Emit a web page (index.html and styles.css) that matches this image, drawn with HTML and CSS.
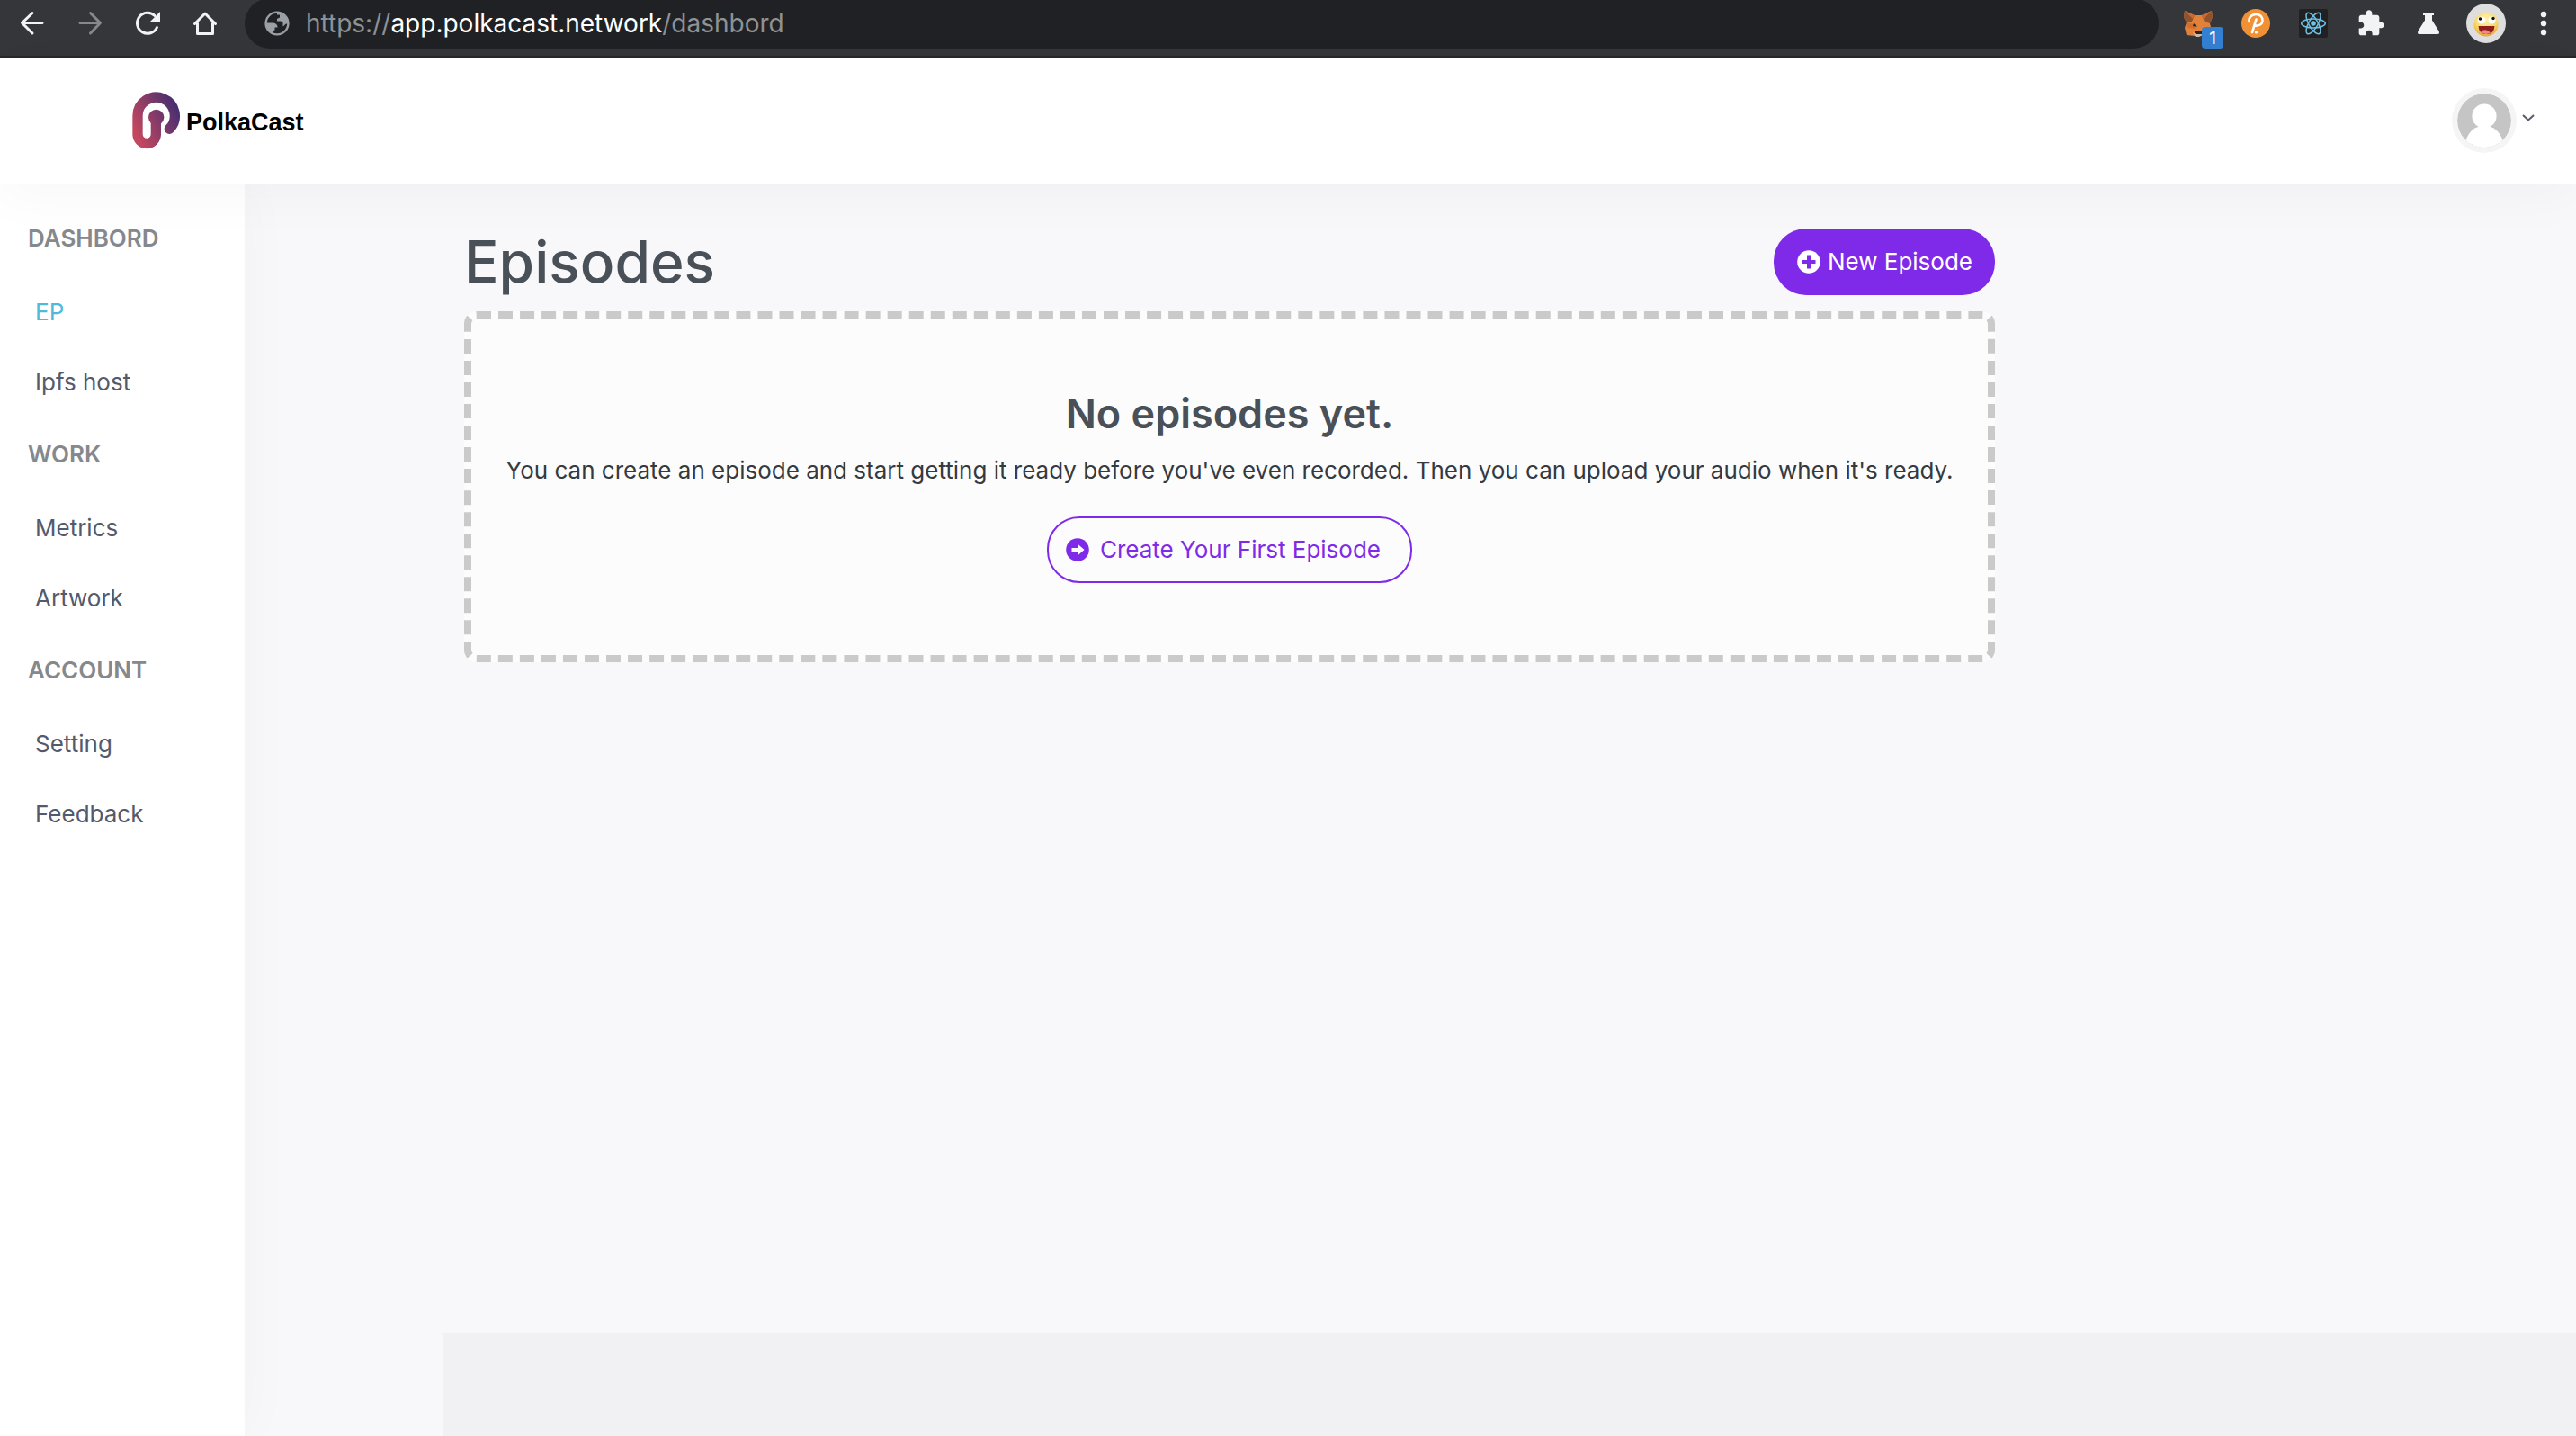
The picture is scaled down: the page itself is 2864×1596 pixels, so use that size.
FILE: index.html
```html
<!DOCTYPE html>
<html lang="en">
<head>
<meta charset="utf-8">
<meta name="viewport" content="width=device-width, initial-scale=1">
<title>PolkaCast</title>
<link rel="stylesheet" href="styles.css">
</head>
<body>
<div class="toolbar">
  <div class="toolbar-group">
    <button class="tool" aria-label="Back"><svg width="32" height="32" viewBox="0 0 32 32" fill="none" stroke="#f1f3f4" stroke-width="3" stroke-linecap="round" stroke-linejoin="round"><path d="M27 15.500H5M16 4.500 4.500 15.500 16 27"/></svg></button>
    <button class="tool" aria-label="Forward"><svg width="32" height="32" viewBox="0 0 32 32" fill="none" stroke="#87888a" stroke-width="3" stroke-linecap="round" stroke-linejoin="round"><path d="M5 15.500H27M16.500 4.500 27.500 15.500 16.500 27"/></svg></button>
    <button class="tool" aria-label="Reload"><svg width="32" height="32" viewBox="0 0 32 32" fill="none"><path d="M26.500 20.500A11.500 11.500 0 1 1 24 7.500" stroke="#f1f3f4" stroke-width="3" stroke-linecap="round"/><path d="M30 3V14H19Z" fill="#f1f3f4"/></svg></button>
    <button class="tool" aria-label="Home"><svg width="32" height="32" viewBox="0 0 32 32" fill="none" stroke="#f1f3f4" stroke-width="3" stroke-linecap="round" stroke-linejoin="round"><path d="M4.500 16.500 16 5 27.500 16.500M7.500 16V27.500H24.500V16"/></svg></button>
  </div>
  <div class="omnibox">
    <svg width="28" height="28" viewBox="0 0 28 28"><circle cx="14" cy="14" r="12.400" fill="none" stroke="#9aa0a6" stroke-width="2.400"/><path d="M1.500 13.500H9.500Q14.500 14 14.500 18.500H11.500V21.500L9 22.500V26A13 13 0 0 1 1.500 13.500Z" fill="#9aa0a6"/><path d="M14 1.500A12.500 12.500 0 0 1 26.500 14.500H24L20.500 17.500V13.500Q20.500 11.500 17.500 11.500H14V9L17 7.500V4.500H14Z" fill="#9aa0a6"/></svg>
    <div class="url">https://<span class="url-host">app.polkacast.network</span>/dashbord</div>
  </div>
  <div class="toolbar-group">
    <button class="tool fox" aria-label="Wallet, 1 notification">
      <svg width="32" height="32" viewBox="0 0 32 32"><path d="M1 2 12 7H20L31 2 32 9 29 16 31 24 28 30 20 28 16 31 12 30 3 29 1 21 3 15 0 9Z" fill="#e2813a"/><path d="M1 2 12 7 9 14 3 15 0 9Z" fill="#8f532f"/><path d="M31 2 20 7 23 14 29 16 32 9Z" fill="#8f532f"/><path d="M1 2 12 7 10 11ZM31 2 20 7 22 11Z" fill="#c86b31"/><path d="M3 15 11 17 13 22 3 21Z" fill="#d16f2f"/><path d="M11 16 15 20 10 19ZM12 24H20V28H12Z" fill="#2b2522"/><path d="M10 26 14 28H20L21 29 17 31H13Z" fill="#cdb9a8"/></svg>
      <span class="badge">1</span>
    </button>
    <button class="tool" aria-label="Polkadot"><svg width="32" height="32" viewBox="0 0 32 32" fill="none"><circle cx="16" cy="16" r="16" fill="#f19135"/><path d="M8.500 14C8 8.500 12 6 16.500 6C21 6 24 9 23.500 13.500C23 17.500 19 19 15 18.500M16.500 11.500 12 26" stroke="#fff" stroke-width="2.600" stroke-linecap="round"/><circle cx="16.500" cy="26" r="1.600" fill="#fff"/></svg></button>
    <button class="tool" aria-label="React tools"><svg width="32" height="32" viewBox="0 0 32 32" fill="none" stroke="#6cc3ea" stroke-width="1.500"><rect width="32" height="32" rx="2" fill="#212121" stroke="none"/><ellipse cx="16" cy="16" rx="13.300" ry="5"/><ellipse cx="16" cy="16" rx="13.300" ry="5" transform="rotate(60 16 16)"/><ellipse cx="16" cy="16" rx="13.300" ry="5" transform="rotate(120 16 16)"/><circle cx="16" cy="16" r="2.800" fill="#6cc3ea" stroke="none"/></svg></button>
    <button class="tool" aria-label="Extensions"><svg width="32" height="32" viewBox="0 0 24 24" fill="#f1f3f4"><path d="M20.500 11H19V7c0-1.100-.9-2-2-2h-4V3.500C13 2.120 11.880 1 10.500 1S8 2.120 8 3.500V5H4c-1.100 0-1.990.9-1.990 2v3.800H3.500c1.490 0 2.700 1.210 2.700 2.700s-1.210 2.700-2.700 2.700H2V20c0 1.100.9 2 2 2h3.800v-1.500c0-1.490 1.210-2.700 2.700-2.700s2.700 1.210 2.700 2.700V22H17c1.100 0 2-.9 2-2v-4h1.500c1.380 0 2.500-1.120 2.500-2.500S21.880 11 20.500 11z"/></svg></button>
    <button class="tool" aria-label="Labs"><svg width="32" height="32" viewBox="0 0 32 32" fill="#f1f3f4"><path d="M10 4H22V7H20V12.500L27.500 24.500Q29 28 26 28H6Q3 28 4.500 24.500L12 12.500V7H10Z"/></svg></button>
    <button class="tool" aria-label="Profile"><svg width="44" height="44" viewBox="0 0 44 44"><defs><radialGradient id="face" cx=".5" cy=".3" r=".7"><stop offset="0" stop-color="#fff3b0"/><stop offset=".65" stop-color="#f9d96a"/><stop offset="1" stop-color="#e8a233"/></radialGradient></defs><circle cx="22" cy="22" r="22" fill="#dedede"/><circle cx="22" cy="23" r="13.500" fill="url(#face)"/><ellipse cx="17" cy="18.500" rx="4.200" ry="4" fill="#fff"/><ellipse cx="28.500" cy="18.500" rx="4" ry="4" fill="#fff"/><circle cx="15.500" cy="17" r="1.700" fill="#111"/><circle cx="30" cy="16.500" r="1.700" fill="#111"/><path d="M13.500 25H31.500Q31 34 22.500 34Q14 34 13.500 25Z" fill="#8f1f1c"/><path d="M16 31Q22 27 27 32.500Q20 36 16 31Z" fill="#f08a8a"/></svg></button>
    <button class="tool" aria-label="Menu"><svg width="8" height="28" viewBox="0 0 8 28" fill="#f1f3f4"><circle cx="4" cy="4" r="3.200"/><circle cx="4" cy="14" r="3.200"/><circle cx="4" cy="24" r="3.200"/></svg></button>
  </div>
</div>

<header class="header">
  <a class="logo" href="#">
    <svg width="54" height="64" viewBox="51 33 162 192" fill="none"><defs><linearGradient id="mark" gradientUnits="userSpaceOnUse" x1="60" y1="170" x2="205" y2="100"><stop offset="0" stop-color="#c5475f"/><stop offset="1" stop-color="#4a2f70"/></linearGradient></defs><path d="M175 157A62 62 0 1 0 69 113V175A30.500 30.500 0 0 0 130 175V118" stroke="url(#mark)" stroke-width="34" stroke-linecap="round"/><circle cx="131" cy="118" r="26" fill="url(#mark)"/></svg>
    <span class="logo-text">PolkaCast</span>
  </a>
  <button class="account" aria-label="Account menu">
    <svg class="account-photo" width="60" height="60" viewBox="0 0 60 60"><circle cx="30" cy="30" r="30" fill="#c5c5c5"/><circle cx="30" cy="25" r="13.600" fill="#fff"/><path d="M9.500 52Q15 36 30 36T50.500 52A30 30 0 0 1 9.500 52Z" fill="#fff"/></svg>
    <svg class="account-caret" width="14" height="8" viewBox="0 0 14 8" fill="none" stroke="#555b6d" stroke-width="2"><path d="M1 1 7 6.500 13 1"/></svg>
  </button>
</header>

<div class="layout">
  <nav class="sidebar">
    <h2 class="nav-title">DASHBORD</h2>
    <a class="nav-link active" href="#">EP</a>
    <a class="nav-link" href="#">Ipfs host</a>
    <h2 class="nav-title">WORK</h2>
    <a class="nav-link" href="#">Metrics</a>
    <a class="nav-link" href="#">Artwork</a>
    <h2 class="nav-title">ACCOUNT</h2>
    <a class="nav-link" href="#">Setting</a>
    <a class="nav-link" href="#">Feedback</a>
  </nav>
  <div class="page">
    <main class="content">
      <div class="heading">
        <h1>Episodes</h1>
        <button class="btn btn-solid"><svg width="26" height="26" viewBox="0 0 26 26"><circle cx="13" cy="13" r="12.800" fill="#fff"/><path d="M13 5.500V20.500M5.500 13H20.500" stroke="#7f2ae8" stroke-width="4"/></svg>New Episode</button>
      </div>
      <section class="empty">
        <h2>No episodes yet.</h2>
        <p>You can create an episode and start getting it ready before you've even recorded. Then you can upload your audio when it's ready.</p>
        <button class="btn btn-outline"><svg width="26" height="26" viewBox="0 0 26 26"><circle cx="13" cy="13" r="12.800" fill="#7f2ae8"/><path d="M6.500 11H13V6.500L20.500 13 13 19.500V15H6.500Z" fill="#fff"/></svg>Create Your First Episode</button>
      </section>
    </main>
    <footer class="footer"></footer>
  </div>
</div>
</body>
</html>
```
FILE: styles.css
```css
* { box-sizing: border-box; }

body {
  margin: 0;
  min-height: 100vh;
  display: flex;
  flex-direction: column;
  background: #f8f8fb;
  color: #343a40;
  font: 26px/40px Inter, "Liberation Sans", sans-serif;
}

h1, h2, p { margin: 0; }
button { font: inherit; border: 0; padding: 0; background: none; cursor: pointer; }
a { color: inherit; text-decoration: none; }
svg { display: block; flex: none; }

/* Browser toolbar */
.toolbar {
  display: flex;
  align-items: center;
  gap: 12px;
  height: 64px;
  padding: 0 4px 10px;
  overflow: hidden;
  background: #35363a;
  border-bottom: 2px solid #27282a;
}
.toolbar-group { display: flex; }
.tool {
  position: relative;
  display: flex;
  align-items: center;
  justify-content: center;
  width: 64px;
  height: 52px;
}
.badge {
  position: absolute;
  right: 4px;
  bottom: -2px;
  width: 24px;
  height: 24px;
  border-radius: 4px;
  background: #3380d2;
  color: #fff;
  font-size: 18px;
  font-weight: 500;
  line-height: 26px;
}
.omnibox {
  flex: 1;
  display: flex;
  align-items: center;
  gap: 18px;
  height: 56px;
  padding: 0 22px;
  border-radius: 28px;
  background: #202124;
}
.url { font-size: 28px; color: #8e9195; }
.url-host { color: #fff; }

/* Site header */
.header {
  position: relative;
  z-index: 2;
  display: flex;
  align-items: center;
  justify-content: space-between;
  height: 140px;
  padding: 0 46px 0 147px;
  background: #fff;
  box-shadow: 0 16px 60px rgba(0, 0, 20, .03);
}
.logo { display: flex; align-items: center; gap: 6px; }
.logo-text {
  padding-top: 4px;
  color: #000;
  font: bold 27px/32px "Liberation Sans", Arial, sans-serif;
}
.account { display: flex; align-items: center; gap: 6px; }
.account-photo { width: 72px; height: 72px; padding: 6px; border-radius: 50%; background: #f5f5f5; }
.account-caret { margin-bottom: 6px; }

/* Sidebar */
.layout { flex: 1; display: flex; }
.sidebar {
  position: relative;
  z-index: 1;
  width: 272px;
  padding-top: 20px;
  background: #fff;
  box-shadow: 0 0 60px rgba(0, 0, 20, .03);
}
.nav-title {
  padding: 24px 31px 26px;
  color: #85888c;
  font-size: 26px;
  font-weight: 600;
  line-height: 34px;
}
.nav-link {
  display: block;
  padding: 22px 39px;
  color: #545a6d;
  line-height: 34px;
}
.nav-link.active { color: #50b9d9; }

/* Main area */
.page {
  flex: 1;
  min-width: 0;
  display: flex;
  flex-direction: column;
  padding-left: 220px;
}
.content {
  flex: 1;
  display: flex;
  flex-direction: column;
  gap: 18px;
  max-width: 1750px;
  padding: 50px 24px;
}
.heading { display: flex; align-items: center; justify-content: space-between; }
h1 { color: #495057; font-size: 64px; font-weight: 500; line-height: 74px; }

.btn {
  display: flex;
  align-items: center;
  height: 74px;
  border-radius: 36px;
}
.btn-solid { gap: 8px; padding: 0 25px 0 26px; background: #7f2ae8; color: #fff; }
.btn-outline {
  gap: 12px;
  padding: 0 33px 0 19px;
  border: 2px solid #7f2ae8;
  color: #7f2ae8;
}

.empty {
  display: flex;
  flex-direction: column;
  align-items: center;
  padding: 79px 32px 80px;
  border: 8px dashed #cacaca;
  border-radius: 14px;
  background: #fcfcfc;
  text-align: center;
}
.empty h2 { color: #495057; font-size: 45px; font-weight: 600; line-height: 54px; }
.empty p { margin: 16px 0 31px; }

.footer { height: 114px; background: #f1f1f3; }
```
